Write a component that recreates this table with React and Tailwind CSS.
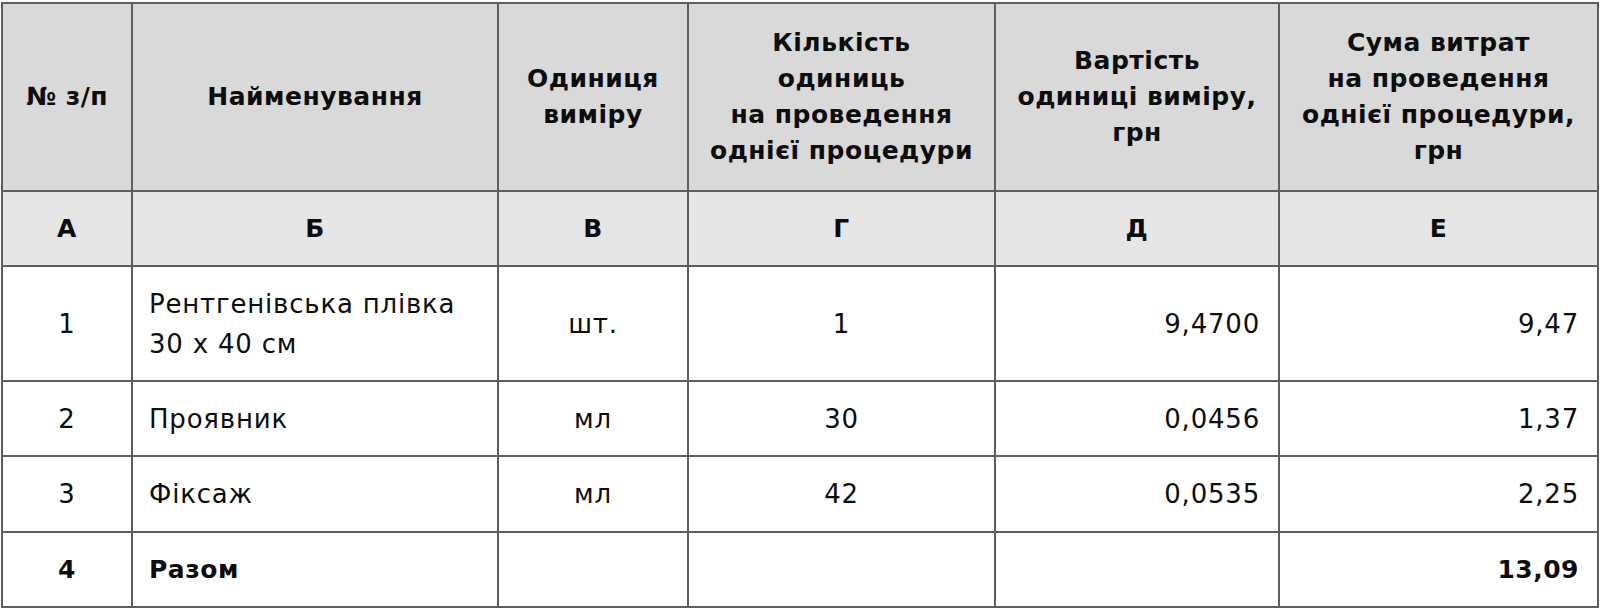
import React from 'react';

const rows = [
  { n: '1', name: ['Рентгенівська плівка', '30 х 40 см'], unit: 'шт.', qty: '1', price: '9,4700', sum: '9,47', h: 'h-[115px]' },
  { n: '2', name: ['Проявник'], unit: 'мл', qty: '30', price: '0,0456', sum: '1,37', h: 'h-[75px]' },
  { n: '3', name: ['Фіксаж'], unit: 'мл', qty: '42', price: '0,0535', sum: '2,25', h: 'h-[76px]' },
];

const cell = 'border-2 border-[#5e5e5e] align-middle';

const App = () => {
  return (
    <div className="w-[1600px] h-[610px] bg-white pt-[2px] px-[1px] font-['DejaVu_Sans',sans-serif] text-[26px] tracking-[0.8px] text-[#0d0d0d]">
      <table className="w-full table-fixed border-collapse">
        <colgroup>
          <col className="w-[130px]" />
          <col className="w-[366px]" />
          <col className="w-[190px]" />
          <col className="w-[307px]" />
          <col className="w-[284px]" />
          <col />
        </colgroup>
        <thead>
          {/* header */}
          <tr className="h-[188px] bg-[#d9d9d9] font-bold text-center text-[25px] tracking-[0.5px] leading-[36px]">
            <th className={cell}>№ з/п</th>
            <th className={cell}>Найменування</th>
            <th className={cell}>Одиниця<br />виміру</th>
            <th className={cell}>Кількість<br />одиниць<br />на проведення<br />однієї процедури</th>
            <th className={cell}>Вартість<br />одиниці виміру,<br />грн</th>
            <th className={cell}>Сума витрат<br />на проведення<br />однієї процедури,<br />грн</th>
          </tr>
          {/* column letters */}
          <tr className="h-[75px] bg-[#e6e6e6] font-bold text-center text-[25px] tracking-[0.5px]">
            <th className={cell}>А</th>
            <th className={cell}>Б</th>
            <th className={cell}>В</th>
            <th className={cell}>Г</th>
            <th className={cell}>Д</th>
            <th className={cell}>Е</th>
          </tr>
        </thead>
        <tbody className="leading-[40px]">
          {rows.map((r) => (
            <tr key={r.n} className={r.h}>
              <td className={`${cell} text-center`}>{r.n}</td>
              <td className={`${cell} px-4`}>
                {r.name.map((l) => (
                  <div key={l}>{l}</div>
                ))}
              </td>
              <td className={`${cell} text-center`}>{r.unit}</td>
              <td className={`${cell} text-center`}>{r.qty}</td>
              <td className={`${cell} text-right pr-[18px]`}>{r.price}</td>
              <td className={`${cell} text-right pr-[18px]`}>{r.sum}</td>
            </tr>
          ))}
          <tr className="h-[75px] font-bold text-[25px] tracking-[0.5px]">
            <td className={`${cell} text-center`}>4</td>
            <td className={`${cell} px-4`}>Разом</td>
            <td className={cell}></td>
            <td className={cell}></td>
            <td className={cell}></td>
            <td className={`${cell} text-right pr-[18px]`}>13,09</td>
          </tr>
        </tbody>
      </table>
    </div>
  );
};

export default App;
